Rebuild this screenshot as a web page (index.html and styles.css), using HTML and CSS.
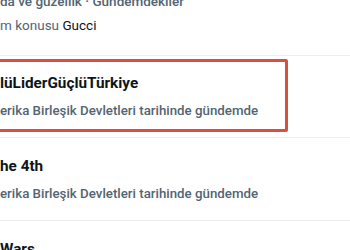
FILE: index.html
```html
<!DOCTYPE html>
<html lang="tr">
<head>
  <meta charset="UTF-8">
  <meta name="viewport" content="width=device-width, initial-scale=1.0">
  <title>Gündemdekiler</title>
  <link rel="stylesheet" href="styles.css">
</head>
<body>
  <div class="trends">
    <div class="trend first">
      <div class="meta cat">da ve güzellik · Gündemdekiler</div>
      <div class="meta">m konusu <span class="name">Gucci</span></div>
    </div>

    <div class="trend marked">
      <div class="title">lüLiderGüçlüTürkiye</div>
      <div class="sub">erika Birleşik Devletleri tarihinde gündemde</div>
    </div>

    <div class="trend">
      <div class="title">he 4th</div>
      <div class="sub">erika Birleşik Devletleri tarihinde gündemde</div>
    </div>

    <div class="trend">
      <div class="title">Wars</div>
      <div class="sub">erika Birleşik Devletleri tarihinde gündemde</div>
    </div>
  </div>
</body>
</html>
```

FILE: styles.css
```css
body {
  font-family: Roboto, "Liberation Sans", Arial, sans-serif;
  background-color: #ffffff;
  color: #0f1419;
  margin: 0;
  padding: 0;
  overflow: hidden;
}
.trends {
  display: flex;
  flex-direction: column;
}
.trend {
  position: relative;
  height: 83px;
  padding: 18px 0 0 0;
  box-sizing: border-box;
  border-bottom: 1px solid #eceff1;
}
.trend.first {
  height: 61px;
  margin-top: -5px;
  padding-top: 0;
}
.trend.marked {
  height: 82px;
  padding-top: 17px;
}
.meta {
  font-size: 13.5px;
  line-height: 16px;
  color: #536471;
  margin-bottom: 6px;
}
.meta.cat {
  font-weight: 500;
  margin-top: -2px;
  margin-bottom: 8px;
}
.meta .name {
  color: #0f1419;
}
.title {
  font-size: 15.3px;
  font-weight: 700;
  line-height: 20px;
}
.sub {
  margin-top: 10px;
  font-size: 13.3px;
  font-weight: 500;
  line-height: 16px;
  color: #536471;
}
.marked::after {
  content: "";
  position: absolute;
  left: -6px;
  top: 3px;
  width: 294px;
  height: 73px;
  box-sizing: border-box;
  border: 3px solid #db4f3f;
  border-radius: 2px;
}
```
